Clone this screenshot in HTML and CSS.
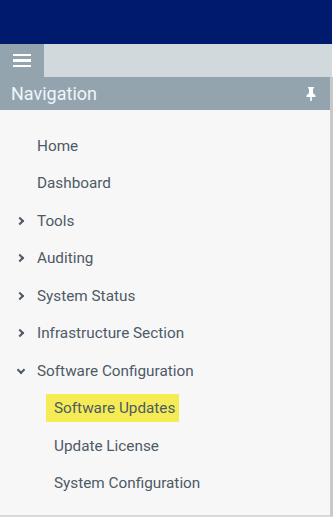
FILE: index.html
```html
<!DOCTYPE html>
<html lang="en">

<head>
    <meta charset="UTF-8">
    <meta name="viewport" content="width=device-width, initial-scale=1.0">
    <title>Navigation</title>
    <link rel="stylesheet" href="styles.css">
</head>

<body>
    <header class="topbar"></header>
    <div class="toolbar">
        <button class="menu-btn" aria-label="Menu">
            <span></span><span></span><span></span>
        </button>
    </div>
    <section class="panel">
        <div class="panel-head">
            <span>Navigation</span>
            <svg class="pin" width="10" height="14" viewBox="0 0 10 14">
                <path d="M2 0h6v1.5H7v4.5l2.5 2.5V10H5.8v4H4.2v-4H0.5V8.5L3 6V1.5H2z" fill="#fff"/>
            </svg>
        </div>
        <ul class="nav">
            <li><a href="#">Home</a></li>
            <li><a href="#">Dashboard</a></li>
            <li class="closed"><a href="#">Tools</a></li>
            <li class="closed"><a href="#">Auditing</a></li>
            <li class="closed"><a href="#">System Status</a></li>
            <li class="closed"><a href="#">Infrastructure Section</a></li>
            <li class="open"><a href="#">Software Configuration</a></li>
            <li class="sub"><a href="#" class="active">Software Updates</a></li>
            <li class="sub"><a href="#">Update License</a></li>
            <li class="sub"><a href="#">System Configuration</a></li>
        </ul>
    </section>
</body>

</html>
```

FILE: styles.css
```css
* {
    box-sizing: border-box;
}

body {
    margin: 0;
    width: 336px;
    font-family: Roboto, "Liberation Sans", Arial, sans-serif;
    background: #fff;
}

.topbar {
    width: 332px;
    height: 44px;
    background: #001a6d;
}

.toolbar {
    width: 332px;
    height: 33px;
    background: #d2d9dd;
    display: flex;
}

.menu-btn {
    width: 44px;
    height: 33px;
    border: 0;
    padding: 0;
    margin: 0;
    background: #94a4af;
    display: flex;
    flex-direction: column;
    align-items: center;
    justify-content: center;
    gap: 3px;
    cursor: pointer;
}

.menu-btn span {
    display: block;
    width: 18px;
    height: 2.6px;
    background: #fff;
}

.panel {
    width: 333px;
    height: 440px;
    background: #f7f7f7;
    border-right: 3px solid #c9c9c9;
    border-bottom: 2px solid #d9d9d9;
}

.panel-head {
    height: 33px;
    background: #94a4af;
    display: flex;
    align-items: center;
    justify-content: space-between;
    padding: 0 14px 0 11px;
    color: #eef6fb;
    font-size: 18px;
    font-weight: 400;
}

.pin {
    margin-top: 1px;
}

.nav {
    list-style: none;
    margin: 0;
    padding: 17px 0 0;
}

.nav li {
    height: 37.5px;
    display: flex;
    align-items: center;
    position: relative;
    padding-left: 37px;
}

.nav li.sub {
    padding-left: 46px;
}

.nav a {
    color: #4e5a66;
    text-decoration: none;
    font-size: 15.3px;
    line-height: 28px;
}

.nav li.sub a {
    padding: 0 4px 0 8px;
}

.nav a.active {
    background: #f5ec55;
}

.nav li.closed::before,
.nav li.open::before {
    content: "";
    position: absolute;
    left: 18px;
    top: 50%;
    width: 4px;
    height: 4px;
    border-right: 2px solid #4e5a66;
    border-bottom: 2px solid #4e5a66;
}

.nav li.closed::before {
    transform: translate(-1px, -3px) rotate(-45deg);
}

.nav li.open::before {
    transform: translate(0, -4px) rotate(45deg);
}
```
